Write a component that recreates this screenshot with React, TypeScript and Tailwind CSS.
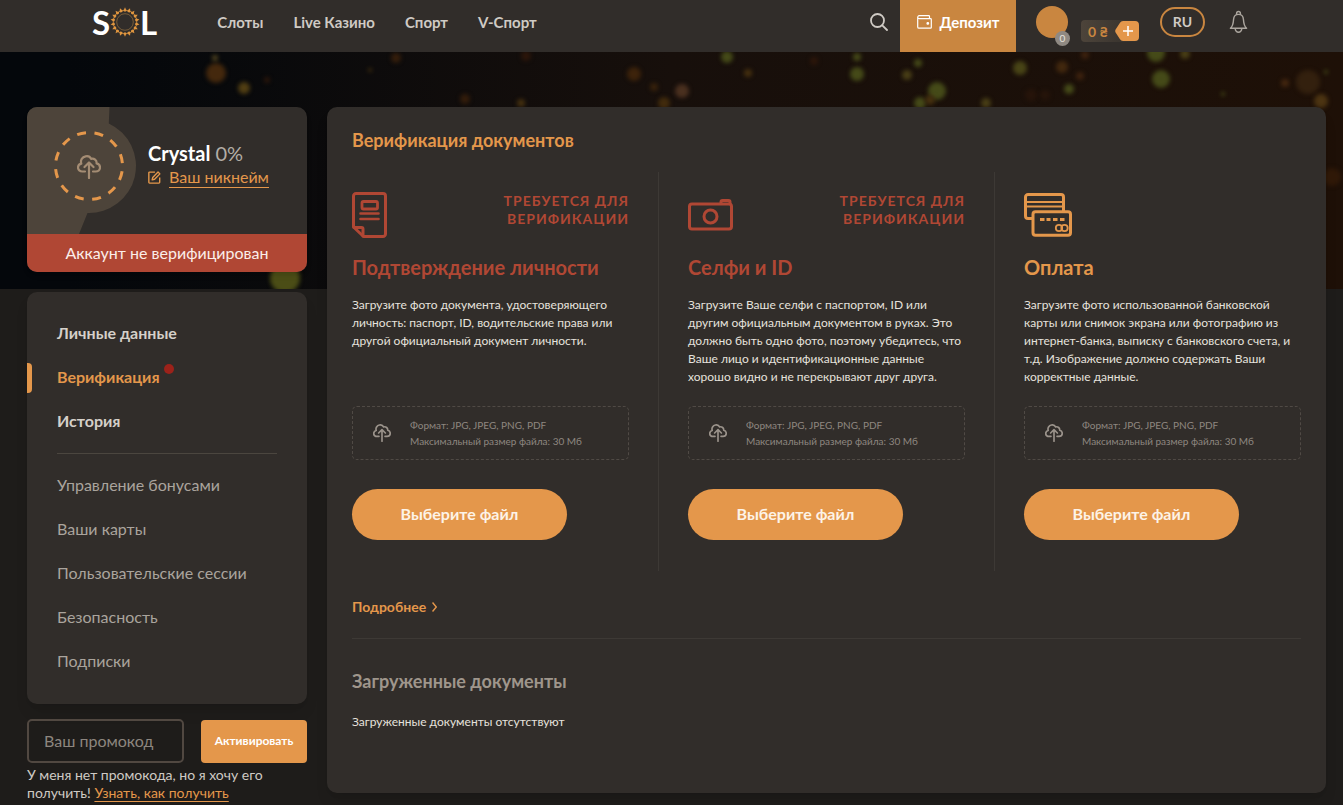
import React from 'react';
import { clsx } from 'clsx';

interface IconProps {
  className?: string;
}

const CloudUploadIcon: React.FC<IconProps> = ({ className }) => (
  <svg className={className} viewBox="0 0 24 24" fill="none" stroke="currentColor" strokeWidth={2.2} strokeLinecap="round" strokeLinejoin="round">
    <path d="M8 16.500H5.400C2.900 16.500 1 14.800 1 12.600c0-2 1.300-3.500 3.300-3.900C3.100 5.200 5.300 2 8.600 1.300c2.400-.5 4.600.6 5.500 2.600 3-.8 5.900 1.400 5.500 4.500 2 .5 3.400 2.100 3.400 4 0 2.400-1.900 4.100-4.300 4.100H16" />
    <path d="M12 23V7.500M7.500 12 12 7.500l4.500 4.500" />
  </svg>
);

const EditIcon: React.FC<IconProps> = ({ className }) => (
  <svg className={className} viewBox="0 0 14 14" fill="none" stroke="currentColor" strokeWidth={1.5} strokeLinejoin="round">
    <path d="M7.500 1.200H1.700a.8.8 0 0 0-.8.8v10.200c0 .5.400.8.800.8h10c.5 0 .9-.4.900-.8V7" />
    <path d="m4.500 9.500.6-2.600 5.700-5.800 2 2L7.100 8.900z" />
  </svg>
);

const SearchIcon: React.FC<IconProps> = ({ className }) => (
  <svg className={className} viewBox="0 0 18 18" fill="none" stroke="currentColor" strokeWidth={1.8} strokeLinecap="round">
    <circle cx="7.500" cy="7.500" r="6.500" />
    <path d="m12.300 12.300 4.700 4.700" />
  </svg>
);

const WalletIcon: React.FC<IconProps> = ({ className }) => (
  <svg className={className} viewBox="0 0 15 14" fill="none" stroke="currentColor" strokeWidth={1.2} strokeLinejoin="round">
    <path d="M12.500 3.600V1.500a.8.8 0 0 0-.8-.8H2.200a1.450 1.450 0 0 0 0 2.900h11.300a.8.8 0 0 1 .8.8v8a.8.8 0 0 1-.8.8H2a1.300 1.300 0 0 1-1.300-1.300V2.200" />
    <circle cx="10.800" cy="8.400" r=".8" fill="currentColor" />
  </svg>
);

const BellIcon: React.FC<IconProps> = ({ className }) => (
  <svg className={className} viewBox="0 0 20 24" fill="none" stroke="currentColor" strokeWidth={1.500} strokeLinejoin="round" strokeLinecap="round">
    <path d="M8 4V3a2 2 0 0 1 4 0v1" />
    <path d="M10 4c-3.300 0-5 2.400-5.200 5.300-.3 5-1 7.200-3.300 9.200h17c-2.300-2-3-4.200-3.300-9.200C15 6.400 13.300 4 10 4z" />
    <path d="M6.500 19c.3 2.400 1.600 3.700 3.500 3.700s3.200-1.300 3.500-3.700" />
  </svg>
);

const DocumentIcon: React.FC<IconProps> = ({ className }) => (
  <svg className={className} viewBox="0 0 36 46" fill="none" stroke="currentColor" strokeWidth={3} strokeLinejoin="round" strokeLinecap="round">
    <path d="M4 1.500h27a2.500 2.500 0 0 1 2.500 2.500v38a2.500 2.500 0 0 1-2.500 2.500H11.500L1.500 35V4A2.500 2.500 0 0 1 4 1.500z" />
    <path d="M2 35.500h7.500a1.500 1.500 0 0 1 1.500 1.500v7" />
    <rect x="10" y="9.500" width="15.500" height="7.500" rx="1.500" strokeWidth={2.800} />
    <path d="M8.500 21.500h18M8.500 27h18" strokeWidth={2.600} />
  </svg>
);

const CameraIcon: React.FC<IconProps> = ({ className }) => (
  <svg className={className} viewBox="0 0 46 34" fill="none" stroke="currentColor" strokeWidth={3} strokeLinejoin="round">
    <rect x="1.500" y="6" width="42" height="25" rx="2.500" />
    <path d="M33 5.500V4a1.500 1.500 0 0 1 1.500-1.500h6A1.500 1.500 0 0 1 42 4v2" />
    <circle cx="22.500" cy="18.500" r="6.500" />
  </svg>
);

const CardsIcon: React.FC<IconProps> = ({ className }) => (
  <svg className={className} viewBox="0 0 48 44" fill="none" stroke="currentColor" strokeWidth={3} strokeLinejoin="round">
    <path d="M9 25.500H4A2.500 2.500 0 0 1 1.500 23V4A2.500 2.500 0 0 1 4 1.500h33A2.500 2.500 0 0 1 39.500 4v14" />
    <path d="M2 9h37M2 13.500h37" strokeWidth={2} />
    <rect x="9" y="18.800" width="37.500" height="23.500" rx="2.500" />
    <path d="M16 26.500h4.500M22.500 26.500h4M29 26.500h4.500M36 26.500h4.500" strokeWidth={2.800} />
    <circle cx="35" cy="35" r="3.200" strokeWidth={1.800} />
    <circle cx="40.500" cy="35" r="3.200" strokeWidth={1.800} />
  </svg>
);

const SunRing = () => (
  <svg className="w-[30px] h-[30px]" viewBox="0 0 30 30">
    <circle cx="15" cy="15" r="8.300" fill="none" stroke="#94703f" strokeWidth={0.7} />
    {Array.from({ length: 18 }, (_, i) => (
      <path key={i} d="M15 .3l1 2.100 1.100.8-1.200 1.400h-1.800l-1.200-1.400 1.100-.8z" fill="#e0963f" transform={`rotate(${i * 20} 15 15)`} />
    ))}
  </svg>
);

const OLIVE = '#454a18';
const AMBER = '#45300f';
const BROWN = '#2c160a';

const lights: [number, number, number, string][] = [
  [216, 21, 10, '#44280d'], [215, 6, 3, '#544620'], [244, 36, 6, '#513e13'], [267, 28, 3, BROWN],
  [396, 6, 5, '#351e0b'], [370, 18, 2, AMBER], [465, 47, 5, '#331d0b'], [521, 51, 4, AMBER],
  [526, 4, 5, BROWN], [634, 22, 7, '#3d230b'], [654, 35, 4, '#38220b'], [682, 39, 7, '#4a301f'],
  [664, 51, 6, '#422b0c'], [727, 5, 6, OLIVE], [748, 21, 4, AMBER], [814, 9, 4, BROWN],
  [857, 5, 4, OLIVE], [857, 22, 7, OLIVE], [918, 11, 4, OLIVE], [907, 23, 5, '#483e16'],
  [937, 39, 9, OLIVE], [920, 51, 6, OLIVE], [930, 48, 5, AMBER], [986, 51, 5, '#483e16'],
  [1020, 16, 7, '#484416'], [1062, 15, 6, '#42280e'], [1080, 24, 4, '#3d220e'], [1069, 37, 5, OLIVE],
  [1085, 3, 4, '#3d220e'], [1031, 43, 6, '#26140a'], [1045, 43, 5, '#26140a'], [1156, 1, 9, OLIVE],
  [1185, 2, 5, '#483e16'], [1161, 27, 9, OLIVE], [1223, 42, 2, OLIVE], [1285, 31, 4, '#44260f'],
  [1308, 30, 12, '#33200e'], [1321, 49, 7, '#4c3412'], [1326, 20, 2, OLIVE], [1332, 125, 9, '#301908'],
  [285, 226, 15, '#4b4d16'],
];

const HeroBackdrop = () => (
  <div className="absolute inset-x-0 top-[52px] h-[237px] bg-linear-to-r from-[#04070b] from-5% via-[#170f0b] via-50% to-[#1e1007]">
    <svg className="w-full h-full" viewBox="0 0 1343 237" preserveAspectRatio="xMidYMin slice">
      <defs>
        <filter id="soft" x="-60%" y="-60%" width="220%" height="220%" colorInterpolationFilters="sRGB">
          <feGaussianBlur stdDeviation="2" />
        </filter>
      </defs>
      {lights.map(([x, y, r, fill]) => (
        <circle key={`${x}-${y}`} cx={x} cy={y} r={r} fill={fill} filter="url(#soft)" />
      ))}
    </svg>
  </div>
);

const navLinks = ['Слоты', 'Live Казино', 'Спорт', 'V-Спорт'];

const Header = () => (
  <header className="relative flex items-stretch justify-between h-[52px] pl-[92px] pr-[95px] bg-[#312d2a] text-[#cfcac4]">
    <div className="flex items-center mb-2">
      <a href="#" className="flex items-center text-white text-[33px] leading-none font-bold">
        S<SunRing />L
      </a>
      <nav className="flex items-center gap-[30px] ml-[60px] text-[15px] font-bold">
        {navLinks.map((label) => (
          <a key={label} href="#">{label}</a>
        ))}
      </nav>
    </div>

    <div className="flex items-center">
      <button aria-label="Поиск" className="mb-2 mr-3">
        <SearchIcon className="w-[18px] h-[18px]" />
      </button>
      <button className="flex items-center justify-center self-stretch gap-2 w-[116px] pb-2 bg-[#c98640] text-white text-[15px] font-bold">
        <WalletIcon className="w-[15px] h-[14px]" />
        Депозит
      </button>
      <div className="relative w-8 h-8 mb-2 ml-5 rounded-full bg-[#c98640]">
        <span className="absolute -right-0.5 top-[25px] flex items-center justify-center w-[15px] h-[15px] rounded-full bg-[#8f8982] text-[10px] text-[#e6e2dc]">0</span>
      </div>
      <div className="flex items-stretch h-[22px] mt-2.5 ml-[13px] rounded bg-linear-to-r from-[#4d443a] to-[#332f2b]">
        <span className="flex items-center w-[34px] pl-[7px] text-[14px] font-bold text-[#c98640]">0 ₴</span>
        <button aria-label="Пополнить" className="flex w-6 h-5 my-px">
          <svg viewBox="0 0 24 20" className="w-6 h-5">
            <path d="M5 1.800Q6 0 8 0h12a4 4 0 0 1 4 4v12a4 4 0 0 1-4 4H8q-2 0-3-1.800L.6 11.500q-.8-1.500 0-3z" fill="#e4974b" />
            <path d="M13 5v10M8 10h10" stroke="#fff" strokeWidth={1.500} />
          </svg>
        </button>
      </div>
      <button className="w-[45px] h-[30px] mb-2 ml-[21px] rounded-full border-2 border-[#c98640] text-[14px] font-bold leading-none">RU</button>
      <button aria-label="Уведомления" className="mb-2 ml-6">
        <BellIcon className="w-[19px] h-6 text-[#aba59e]" />
      </button>
    </div>
  </header>
);

const ProfileCard = () => (
  <section className="rounded-[10px] overflow-hidden bg-[#312d2a] shadow-md">
    <div className="relative flex items-center h-[127px]">
      <svg className="absolute left-0 top-0 w-[112px] h-[127px]" viewBox="0 0 112 127">
        <path d="M0 0h82.500l-.7 16.400A47 47 0 0 1 60.500 106L52 127H0z" fill="#4d443a" />
        <circle cx="62" cy="59" r="33.500" fill="none" stroke="#e4974b" strokeWidth={3} strokeDasharray="9 8.540" transform="rotate(9 62 59)" />
      </svg>
      <button aria-label="Загрузить аватар" className="relative ml-[50px] mb-2">
        <CloudUploadIcon className="w-6 h-6 text-[#a48c73]" />
      </button>
      <div className="ml-[47px] mb-3">
        <p className="text-[20px] leading-6 text-[#b3ada6]">
          <strong className="font-bold text-white">Crystal</strong> 0%
        </p>
        <a href="#" className="flex items-center gap-2 mt-0.5 text-[16px] leading-5 text-[#e4974b]">
          <EditIcon className="w-[13px] h-[13px]" />
          <span className="border-b border-[#e4974b]">Ваш никнейм</span>
        </a>
      </div>
    </div>
    <p className="h-[38px] bg-[#b04734] text-center text-[16px] leading-[38px] text-[#fbeee9]">Аккаунт не верифицирован</p>
  </section>
);

const mainMenu = ['Личные данные', 'Верификация', 'История'];
const extraMenu = ['Управление бонусами', 'Ваши карты', 'Пользовательские сессии', 'Безопасность', 'Подписки'];

const SideMenu = () => (
  <nav className="mt-5 pt-[19px] pb-[21px] rounded-[10px] bg-[#312d2a] shadow-lg">
    <ul className="text-[16px] font-bold text-[#d5d0c9]">
      {mainMenu.map((label) => {
        const active = label === 'Верификация';
        return (
          <li key={label} className={clsx('relative flex items-center h-11 px-[30px]', active && 'text-[#e4974b]')}>
            {active && <span className="absolute left-0 top-2 w-[5px] h-[30px] rounded-r bg-[#e4974b]" />}
            <a href="#">{label}</a>
            {active && <span className="w-2.5 h-2.5 ml-1 mb-4 rounded-full bg-[#9c221a]" />}
          </li>
        );
      })}
    </ul>
    <hr className="mx-[30px] mt-2.5 mb-[9px] border-[#4b463f]" />
    <ul className="text-[16px] text-[#aaa49d]">
      {extraMenu.map((label) => (
        <li key={label} className="flex items-center h-11 px-[30px]">
          <a href="#">{label}</a>
        </li>
      ))}
    </ul>
  </nav>
);

const PromoForm = () => (
  <form className="mt-[15px]" onSubmit={(e) => e.preventDefault()}>
    <div className="flex items-center gap-[17px]">
      <input
        type="text"
        aria-label="Ваш промокод"
        placeholder="Ваш промокод"
        className="flex-1 min-w-0 h-11 px-[15px] pb-0.5 rounded-[5px] border-2 border-[#514841] bg-transparent text-[16px] placeholder-[#8d867f] focus:outline-none"
      />
      <button className="w-[106px] h-[43px] rounded bg-[#e4974b] text-[12px] font-bold text-white">Активировать</button>
    </div>
    <p className="mt-[3px] text-[14px] leading-[18px] text-[#cfcac4]">
      У меня нет промокода, но я хочу его получить!{' '}
      <a href="#" className="text-[#e4974b] underline underline-offset-3">Узнать, как получить</a>
    </p>
  </form>
);

interface UploadCardProps {
  title: string;
  text: string;
  icon: React.ReactNode;
  required?: boolean;
}

const UploadCard: React.FC<UploadCardProps> = ({ title, text, icon, required }) => (
  <section className={clsx('flex-1 min-w-0 pt-5 pb-[31px]', required ? 'text-[#b04734]' : 'text-[#e4974b]')}>
    <div className="flex items-start justify-between h-[61px]">
      <div className="flex items-center h-[46px]">{icon}</div>
      {required && (
        <p className="w-[140px] text-right text-[14px] leading-[18px] font-bold tracking-[1px] uppercase">
          Требуется для верификации
        </p>
      )}
    </div>
    <h2 className="text-[20px] leading-7 font-bold">{title}</h2>
    <p className="min-h-[90px] mt-[15px] text-[12px] leading-[18px] text-[#e6e2dd]">{text}</p>
    <div className="flex items-center h-[54px] mt-5 px-5 rounded-[5px] border border-dashed border-[#504a45] text-[10px] leading-4 text-[#8e8780]">
      <CloudUploadIcon className="shrink-0 w-[18px] h-[18px] text-[#9b938b]" />
      <p className="ml-[19px]">
        Формат: JPG, JPEG, PNG, PDF
        <br />
        Максимальный размер файла: 30 Мб
      </p>
    </div>
    <button className="w-[215px] h-[51px] mt-[29px] pb-0.5 rounded-full bg-[#e4974b] text-[16px] font-bold text-[#fdf3e7]">Выберите файл</button>
  </section>
);

const Divider = () => <div className="w-px bg-[#3d3935]" />;

const Verification = () => (
  <main className="flex-1 min-w-0 px-[25px] pt-[21px] pb-[62px] rounded-[10px] bg-[#312d2a] shadow-lg">
    <h1 className="text-[18px] leading-6 font-bold text-[#e4974b]">Верификация документов</h1>
    <div className="flex gap-[29px] mt-5">
      <UploadCard
        required
        icon={<DocumentIcon className="w-9 h-[46px]" />}
        title="Подтверждение личности"
        text="Загрузите фото документа, удостоверяющего личность: паспорт, ID, водительские права или другой официальный документ личности."
      />
      <Divider />
      <UploadCard
        required
        icon={<CameraIcon className="w-[46px] h-[34px]" />}
        title="Селфи и ID"
        text="Загрузите Ваше селфи с паспортом, ID или другим официальным документом в руках. Это должно быть одно фото, поэтому убедитесь, что Ваше лицо и идентификационные данные хорошо видно и не перекрывают друг друга."
      />
      <Divider />
      <UploadCard
        icon={<CardsIcon className="w-12 h-11" />}
        title="Оплата"
        text="Загрузите фото использованной банковской карты или снимок экрана или фотографию из интернет-банка, выписку с банковского счета, и т.д. Изображение должно содержать Ваши корректные данные."
      />
    </div>
    <a href="#" className="flex items-center gap-1.5 mt-[26px] text-[14px] leading-5 font-bold text-[#e4974b]">
      Подробнее
      <svg className="w-[5px] h-2.5" viewBox="0 0 5 10" fill="none" stroke="currentColor" strokeWidth={1.500}>
        <path d="M.5.500 4.300 5 .5 9.500" />
      </svg>
    </a>
    <hr className="mt-[21px] border-[#3d3935]" />
    <h2 className="mt-[30px] text-[18px] leading-6 font-bold text-[#9f968c]">Загруженные документы</h2>
    <p className="mt-5 text-[12px] leading-[18px] text-[#e6e2dd]">Загруженные документы отсутствуют</p>
  </main>
);

export default function App() {
  return (
    <div className="relative min-h-screen bg-[#1e1c1a] font-['Lato','Open_Sans',sans-serif]">
      <HeroBackdrop />
      <Header />
      <div className="relative flex items-start gap-5 pt-[55px] pl-[27px] pr-[17px]">
        <aside className="shrink-0 w-[280px]">
          <ProfileCard />
          <SideMenu />
          <PromoForm />
        </aside>
        <Verification />
      </div>
    </div>
  );
}
